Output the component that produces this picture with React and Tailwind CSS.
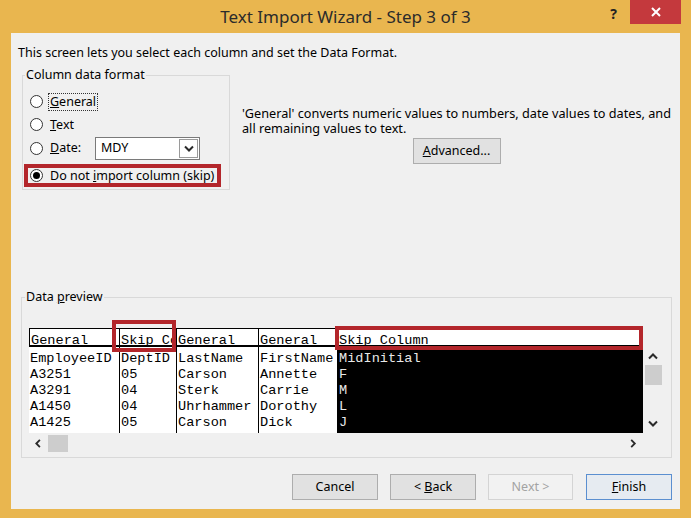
import React from 'react';

const Radio = ({ checked }) => (
  <span className="w-[13px] h-[13px] rounded-full border border-[#333] bg-white flex items-center justify-center shrink-0">
    {checked && <span className="w-[7px] h-[7px] rounded-full bg-black" />}
  </span>
);

const Chevron = ({ dir }) => {
  const pts = {
    up: '1,6 5,2 9,6',
    down: '1,2 5,6 9,2',
    left: '6,1 2,5 6,9',
    right: '3,1 7,5 3,9',
  }[dir];
  const vb = dir === 'up' || dir === 'down' ? '0 0 10 8' : '0 0 10 10';
  return (
    <svg viewBox={vb} className="w-[10px] h-[9px]">
      <polyline points={pts} fill="none" stroke="#2a2a2a" strokeWidth="2" />
    </svg>
  );
};

const columns = [
  { w: 'w-[90px]', head: 'General', rows: ['EmployeeID', 'A3251', 'A3291', 'A1450', 'A1425'], first: true },
  { w: 'w-[57px]', head: 'Skip Co', rows: ['DeptID', '05', '04', '04', '05'] },
  { w: 'w-[82px]', head: 'General', rows: ['LastName', 'Carson', 'Sterk', 'Uhrhammer', 'Carson'] },
  { w: 'w-[79px]', head: 'General', rows: ['FirstName', 'Annette', 'Carrie', 'Dorothy', 'Dick'] },
  { w: 'w-[306px]', head: 'Skip Column', rows: ['MidInitial', 'F', 'M', 'L', 'J'], skip: true },
];

const Button = ({ children, className = '' }) => (
  <button className={`h-[26px] border text-[12.5px] leading-none flex items-center justify-center ${className}`}>
    {children}
  </button>
);

export default function App() {
  return (
    <div className="w-[691px] h-[518px] bg-[#e9b64f] flex flex-col font-['Noto_Sans',sans-serif] text-black overflow-hidden">
      {/* Title bar */}
      <div className="h-[33px] shrink-0 grid grid-cols-[1fr_auto_1fr]">
        <div />
        <div className="flex items-center text-[17px] text-[#2b2b2b]">Text Import Wizard - Step 3 of 3</div>
        <div className="flex justify-end items-start pr-[10px]">
          <span className="mt-[3px] mr-[13px] text-[14px] font-bold text-[#222]">?</span>
          <div className="w-[51px] h-[24px] bg-[#c4393d] flex items-center justify-center">
            <svg viewBox="0 0 10 10" className="w-[10px] h-[10px]">
              <path d="M1 1 L9 9 M9 1 L1 9" stroke="white" strokeWidth="2" />
            </svg>
          </div>
        </div>
      </div>

      {/* Client area */}
      <div className="mx-[11px] h-[476px] bg-[#f0f0f0] flex flex-col text-[12.5px]">
        <p className="mt-[12px] ml-[7px] leading-[16px]">
          This screen lets you select each column and set the Data Format.
        </p>

        <div className="mt-[7px] flex">
          <fieldset className="ml-[11px] w-[208px] border border-[#d9d9d9]">
            <legend className="ml-[2px] px-[1px] leading-[14px]">Column data format</legend>
            <div className="pt-[8px] pb-[2px] flex flex-col">
              <div className="ml-[1px] w-[197px] h-[23px] flex items-center pl-[6px] gap-[5px]">
                <Radio />
                <span className="border border-dotted border-[#333] px-[1px] leading-[16px]">
                  <u>G</u>eneral
                </span>
              </div>
              <div className="ml-[1px] w-[197px] h-[23px] flex items-center pl-[6px] gap-[5px]">
                <Radio />
                <span className="border border-transparent px-[1px] leading-[16px]">
                  <u>T</u>ext
                </span>
              </div>
              <div className="ml-[1px] w-[197px] h-[24px] flex items-center pl-[6px] gap-[5px]">
                <Radio />
                <span className="w-[47px] border border-transparent px-[1px] leading-[16px]">
                  <u>D</u>ate:
                </span>
                <div className="-ml-[5px] w-[105px] h-[23px] border border-[#7a7a7a] bg-white flex">
                  <span className="flex-1 flex items-center pl-[5px]">MDY</span>
                  <span className="w-[19px] my-[1px] mr-[1px] border border-[#9a9a9a] flex items-center justify-center">
                    <Chevron dir="down" />
                  </span>
                </div>
              </div>
              <div className="mt-[4px] ml-[1px] w-[197px] h-[23px] flex items-center pl-[2px] gap-[5px] border-[4px] border-[#b3262b]">
                <Radio checked />
                <span className="border border-transparent px-[1px] leading-[14px] whitespace-nowrap">
                  Do not <u>i</u>mport column (skip)
                </span>
              </div>
            </div>
          </fieldset>

          <div className="ml-[12px] w-[429px] pt-[38px] flex flex-col">
            <p className="text-[12.7px] leading-[15px] whitespace-nowrap">
              'General' converts numeric values to numbers, date values to dates, and
              <br />
              all remaining values to text.
            </p>
            <Button className="mt-[2px] mx-auto w-[88px] border-[#adadad] bg-[#e1e1e1]">
              <span><u>A</u>dvanced...</span>
            </Button>
          </div>
        </div>

        {/* Data preview */}
        <fieldset className="mt-[100px] ml-[10px] w-[651px] border border-[#d9d9d9] pb-[4px]">
          <legend className="ml-[3px] px-[1px] leading-[14px]">
            Data <u>p</u>review
          </legend>
          <div className="mt-[23px] ml-[6px] w-[636px] h-[126px] flex flex-col">
            <div className="h-[107px] flex">
              <div className="relative mt-[1px] ml-[1px] w-[614px] h-[105px] flex font-['Liberation_Mono',monospace] text-[13.6px]">
                {columns.map((c, i) => (
                  <div key={i} className={`${c.w} flex flex-col`}>
                    <div className="h-[19px] bg-white border-t border-b-2 border-l border-black flex items-end leading-[9px] pl-[1px] whitespace-nowrap">
                      {c.head}
                    </div>
                    <div
                      className={`flex-1 pt-[4px] ${c.first ? '' : 'border-l border-black'} ${
                        c.skip ? 'bg-black text-[#e8e8e8]' : 'bg-white'
                      }`}
                    >
                      {c.rows.map((r, j) => (
                        <div key={j} className="h-[16px] leading-[16px] pl-[1px] whitespace-nowrap overflow-hidden">
                          {r}
                        </div>
                      ))}
                    </div>
                  </div>
                ))}
                <div className="absolute left-[83px] top-[-8px] w-[64px] h-[32px] border-[4px] border-[#b3262b]" />
                <div className="absolute left-[306px] top-[-2px] w-[308px] h-[24px] border-[4px] border-[#b3262b]" />
              </div>
              <div className="w-[20px] pt-[22px] flex flex-col items-center">
                <div className="h-[14px] flex items-center"><Chevron dir="up" /></div>
                <div className="mt-[2px] w-[17px] h-[20px] bg-[#cdcdcd]" />
                <div className="mt-[31px] h-[14px] flex items-center"><Chevron dir="down" /></div>
              </div>
            </div>
            <div className="h-[19px] flex items-start">
              <div className="ml-[6px] w-[10px] h-[18px] flex items-center justify-center"><Chevron dir="left" /></div>
              <div className="ml-[4px] mt-[1px] w-[20px] h-[17px] bg-[#cdcdcd]" />
              <div className="ml-auto mr-[26px] w-[10px] h-[18px] flex items-center justify-center"><Chevron dir="right" /></div>
            </div>
          </div>
        </fieldset>

        {/* Buttons */}
        <div className="mt-[16px] flex justify-end pr-[8px]">
          <Button className="w-[86px] border-[#adadad] bg-[#e1e1e1]">Cancel</Button>
          <Button className="ml-[12px] w-[86px] border-[#adadad] bg-[#e1e1e1]">
            <span>&lt; <u>B</u>ack</span>
          </Button>
          <Button className="ml-[12px] w-[85px] border-[#d4d4d4] bg-[#f2f2f2] text-[#a3a3a3]">Next &gt;</Button>
          <Button className="ml-[13px] w-[86px] border-[#5b8fd0] bg-[#e6ebf1]">
            <span><u>F</u>inish</span>
          </Button>
        </div>
      </div>
    </div>
  );
}
